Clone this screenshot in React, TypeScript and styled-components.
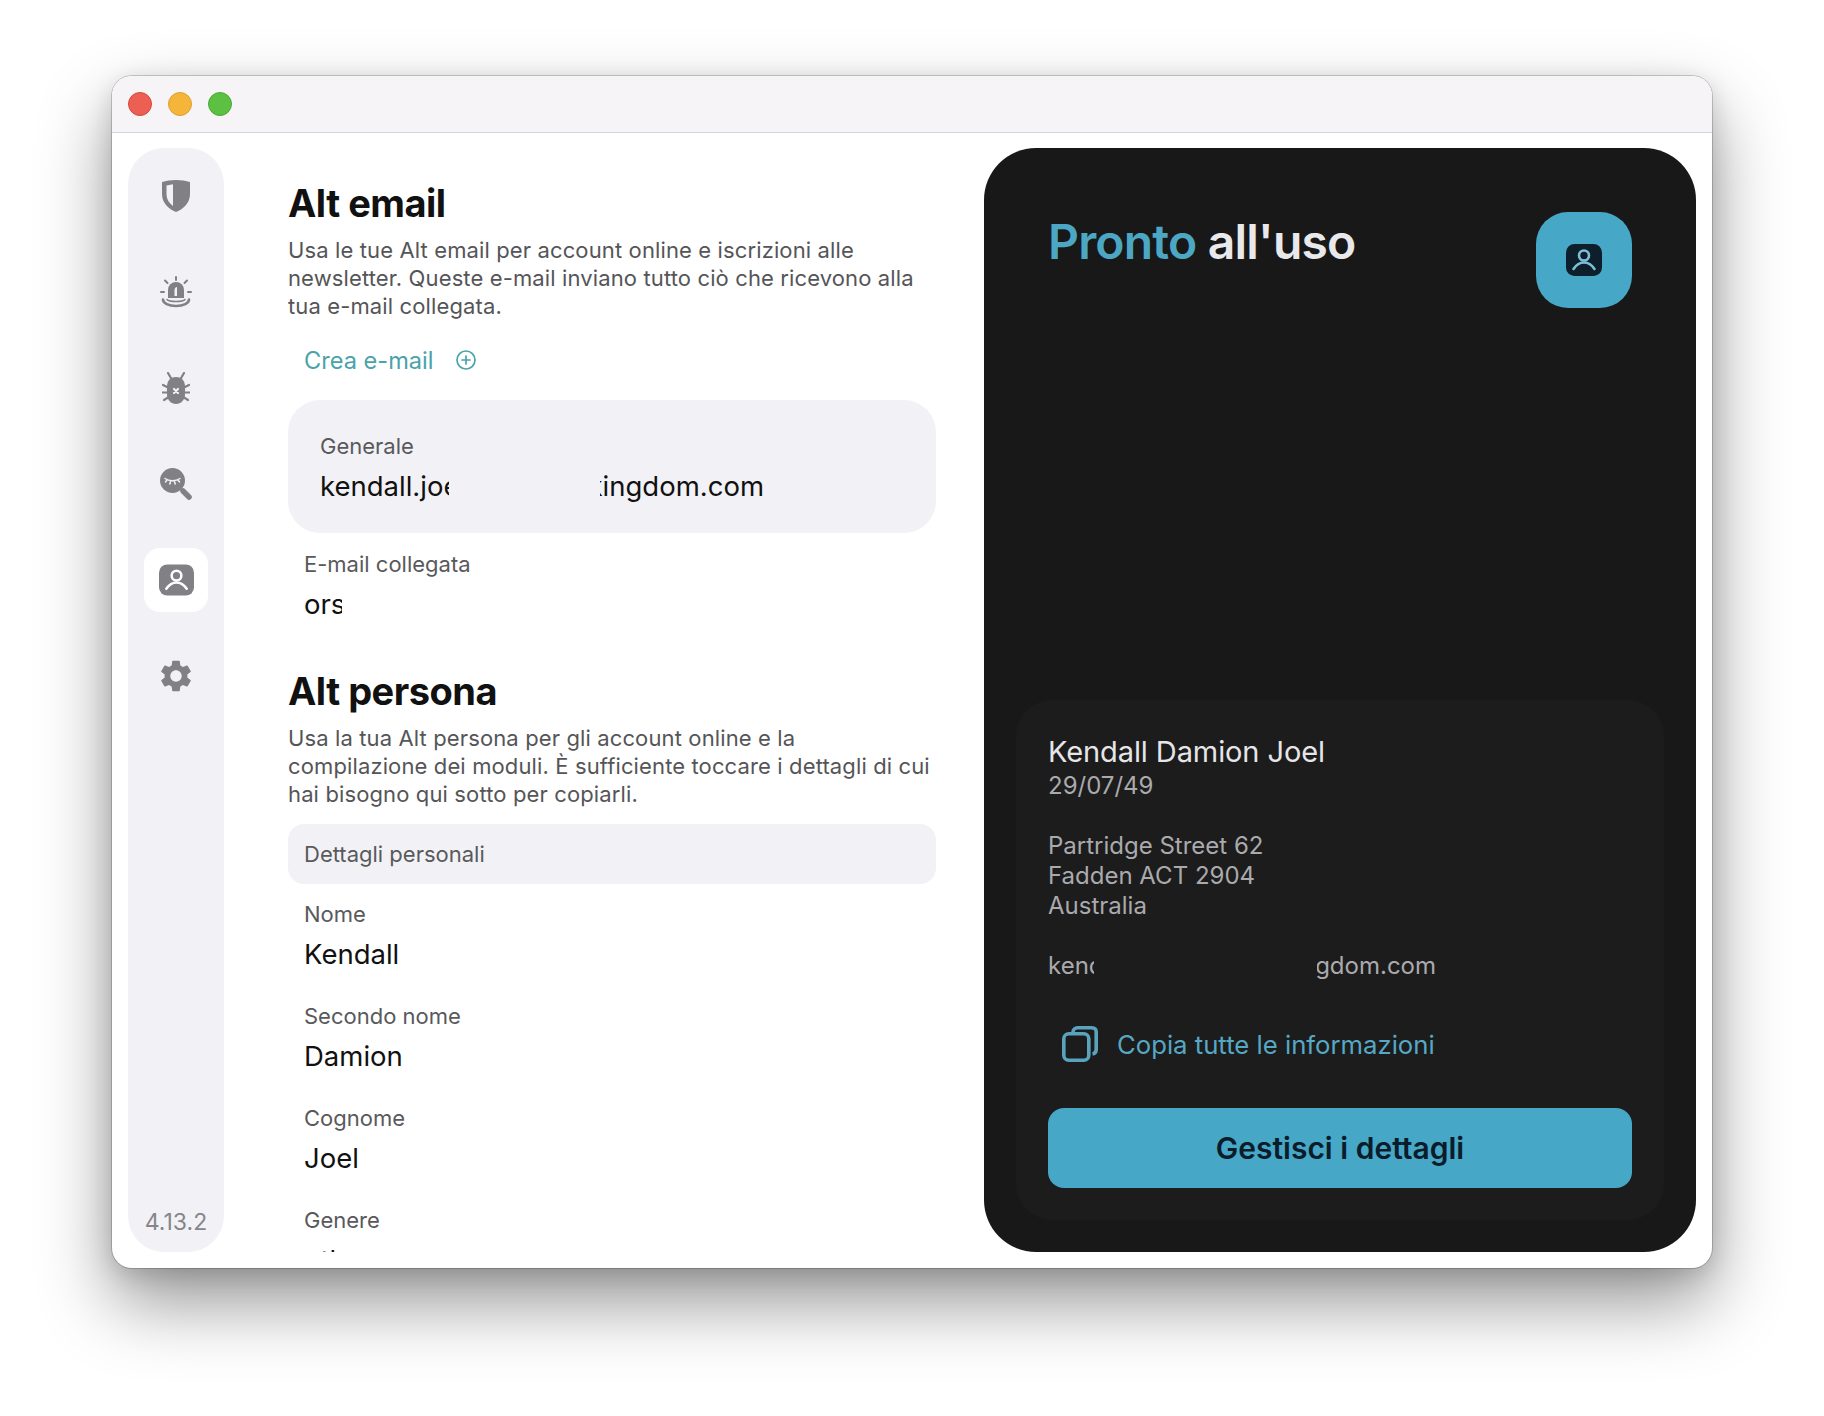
import styled, { createGlobalStyle } from "styled-components";
import { MdSettings } from "react-icons/md";

const GlobalStyle = createGlobalStyle`
	html, body {
		margin: 0;
		background: #fff;
		font-family: Inter, "Noto Sans", sans-serif;
	}
	* { box-sizing: border-box; }
`;

const Page = styled.div`
	width: 1824px;
	height: 1416px;
	padding: 76px 112px 0;
	overflow: hidden;
`;
const AppWindow = styled.div`
	width: 1600px;
	height: 1192px;
	border-radius: 20px;
	background: #fff;
	overflow: hidden;
	box-shadow: 0 0 0 1px rgba(0, 0, 0, 0.18), 0 34px 72px rgba(0, 0, 0, 0.42), 0 6px 24px rgba(0, 0, 0, 0.14);
`;
const TitleBar = styled.div`
	height: 57px;
	background: #f6f4f7;
	border-bottom: 1px solid #d4d4d8;
	display: flex;
	align-items: center;
	gap: 16px;
	padding: 0 16px 1px;
`;
const Light = styled.span<{ $color: string; $edge: string }>`
	width: 24px;
	height: 24px;
	border-radius: 50%;
	background: ${(p) => p.$color};
	border: 1px solid ${(p) => p.$edge};
`;
const Main = styled.div`
	height: 1135px;
	display: flex;
	padding: 15px 16px 16px;
`;
const Sidebar = styled.nav`
	width: 96px;
	flex: none;
	background: #f2f2f6;
	border-radius: 36px;
	display: flex;
	flex-direction: column;
	align-items: center;
	gap: 32px;
	padding: 16px 0 0;
`;
const NavItem = styled.div<{ $active?: boolean }>`
	width: 64px;
	height: 64px;
	flex: none;
	border-radius: 16px;
	display: flex;
	align-items: center;
	justify-content: center;
	color: #808085;
	background: ${(p) => (p.$active ? "#fff" : "transparent")};
`;
const Version = styled.div`
	margin-top: auto;
	margin-bottom: 16px;
	font-size: 23px;
	color: #85858a;
`;
const Content = styled.main`
	width: 648px;
	flex: none;
	margin-left: 64px;
	overflow: hidden;
`;
const Section = styled.section`
	padding-top: 32px;
`;
const Heading = styled.h2`
	margin: 0;
	font-size: 38px;
	line-height: 46px;
	font-weight: 700;
	letter-spacing: -0.5px;
	color: #111;
`;
const Description = styled.p`
	margin: 10px 0 0;
	font-size: 22px;
	line-height: 28px;
	letter-spacing: 0.125px;
	color: #555558;
`;
const CreateLink = styled.div`
	display: flex;
	align-items: center;
	gap: 22px;
	margin: 24px 0 0 16px;
	height: 32px;
	font-size: 23.6px;
	font-weight: 400;
	color: #4aa3a8;
`;
const AccountCard = styled.div`
	margin-top: 24px;
	height: 133px;
	background: #f2f2f6;
	border-radius: 32px;
	padding: 32px 32px 0;
`;
const Field = styled.div`
	padding-left: 16px;
	height: 102px;
`;
const FieldLabel = styled.div`
	font-size: 22px;
	line-height: 28px;
	color: #59595c;
`;
const FieldValue = styled.div`
	margin-top: 8px;
	height: 36px;
	font-size: 27.5px;
	line-height: 36px;
	color: #111;
	display: flex;
	white-space: nowrap;
`;
const Clip = styled.span<{ $width: number; $end?: boolean; $gap?: number }>`
	display: flex;
	flex: none;
	overflow: hidden;
	width: ${(p) => p.$width}px;
	margin-left: ${(p) => p.$gap ?? 0}px;
	justify-content: ${(p) => (p.$end ? "flex-end" : "flex-start")};
`;
const LinkedEmail = styled(Field)`
	margin-top: 17px;
	height: 86px;
`;
const GroupBar = styled.div`
	margin-top: 16px;
	height: 60px;
	background: #f2f2f6;
	border-radius: 16px;
	padding-left: 16px;
	display: flex;
	align-items: center;
	font-size: 22px;
	color: #59595c;
`;
const Fields = styled.div`
	padding-top: 16px;
`;
const Panel = styled.aside`
	width: 712px;
	flex: none;
	margin-left: 48px;
	background: #181818;
	border-radius: 52px;
	padding: 64px 32px 32px;
	display: flex;
	flex-direction: column;
`;
const PanelHead = styled.div`
	display: flex;
	justify-content: space-between;
	padding: 0 32px;
`;
const PanelTitle = styled.h1`
	margin: 1px 0 0;
	font-size: 48px;
	line-height: 58px;
	font-weight: 600;
	letter-spacing: -0.8px;
	color: #e9e9eb;
`;
const Accent = styled.span`
	color: #4ba7c4;
`;
const Tile = styled.div`
	width: 96px;
	height: 96px;
	border-radius: 32px;
	background: #47a7c7;
	display: flex;
	align-items: center;
	justify-content: center;
`;
const InfoCard = styled.div`
	margin-top: auto;
	height: 520px;
	background: #1c1c1d;
	border-radius: 36px;
	padding: 33px 32px 0;
	display: flex;
	flex-direction: column;
`;
const PersonName = styled.div`
	font-size: 29px;
	line-height: 38px;
	font-weight: 400;
	letter-spacing: -0.1px;
	color: #e6e6e8;
`;
const InfoLine = styled.div`
	font-size: 24px;
	line-height: 30px;
	color: #aaaaad;
`;
const InfoBlock = styled.div<{ $gap: number }>`
	margin-top: ${(p) => p.$gap}px;
`;
const EmailLine = styled(InfoLine)`
	display: flex;
	white-space: nowrap;
`;
const CopyRow = styled.div`
	margin: 45px 0 0 14px;
	height: 36px;
	display: flex;
	align-items: center;
	gap: 19px;
	font-size: 25.7px;
	color: #56a8c4;
`;
const ManageButton = styled.div`
	margin-top: 46px;
	height: 80px;
	border-radius: 16px;
	background: #47a7c7;
	display: flex;
	align-items: center;
	justify-content: center;
	font-size: 30px;
	font-weight: 600;
	color: #0b1d2b;
`;

const gray = "#808085";

const ShieldIcon = () => (
	<svg width="28" height="32" viewBox="0 0 28 32">
		<path d="M14 0C19 0 24 .8 28 2v12c0 9-6.500 15-14 18C6.500 29 0 23 0 14V2C4 .8 9 0 14 0Z" fill={gray} />
		<path d="M4.500 5.500 11 4.300v21.700C7 23 4.500 19 4.500 14Z" fill="#f2f2f6" />
	</svg>
);

const SirenIcon = () => (
	<svg width="32" height="32" viewBox="0 0 32 32" fill="none" stroke={gray} strokeWidth="2" strokeLinecap="round">
		<path d="M16 1v3M5 4.500l2.500 2.500M27 4.500 24.500 7M1 16h3M28 16h3" />
		<path d="M8 22v-8a8 8 0 0 1 16 0v8Z" fill={gray} stroke="none" />
		<path d="M14.500 20v-6c0-1.500 1-2.800 2.500-3v9Z" fill="#f2f2f6" stroke="none" />
		<path d="M3 23.500c0 3.500 5.500 6.500 13 6.500s13-3 13-6.500" strokeWidth="2.600" />
		<path d="M7 23.500c1 1.200 4 2 9 2s8-.8 9-2" strokeWidth="1.600" />
	</svg>
);

const BugIcon = () => (
	<svg width="28" height="32" viewBox="0 0 28 32" fill="none" stroke={gray} strokeWidth="2.200" strokeLinecap="round">
		<path d="M6 1l3.500 6M22 1l-3.500 6M1 13l4 2M27 13l-4 2M0.500 20.500H5M27.500 20.500H23M2 28l4-2.500M26 28l-4-2.500" />
		<path d="M14 5c6 0 9 4 9 10v7c0 6-4 10-9 10S5 28 5 22v-7C5 9 8 5 14 5Z" fill={gray} stroke="none" />
		<path d="M12 17l4 4M16 17l-4 4" stroke="#f2f2f6" strokeWidth="2.200" />
	</svg>
);

const PeekIcon = () => (
	<svg width="32" height="32" viewBox="0 0 32 32" fill="none" strokeLinecap="round">
		<circle cx="12.500" cy="12.500" r="12.500" fill={gray} />
		<path d="M23 23l6 6" stroke={gray} strokeWidth="5.500" />
		<path d="M5 10.500c4 3 11 3 15 0M7 12l-1.500 2M10.500 13.500l-.7 2.500M14.500 13.500l.7 2.500M18 12l1.500 2" stroke="#f2f2f6" strokeWidth="1.500" />
	</svg>
);

const PersonTile = ({ w, h, fill, line }: { w: number; h: number; fill: string; line: string }) => (
	<svg width={w} height={h} viewBox="0 0 36 32" fill="none">
		<rect width="36" height="32" rx="8.500" fill={fill} />
		<circle cx="18" cy="11.500" r="5" stroke={line} strokeWidth="2.600" />
		<path d="M7.500 25c3-4.500 6.500-6.500 10.500-6.500s7.500 2 10.500 6.500" stroke={line} strokeWidth="2.600" strokeLinecap="round" />
	</svg>
);

const PlusCircleIcon = () => (
	<svg width="20" height="20" viewBox="0 0 20 20" fill="none" stroke="#4aa3a8" strokeWidth="1.700" strokeLinecap="round">
		<circle cx="10" cy="10" r="9" />
		<path d="M10 6v8M6 10h8" />
	</svg>
);

const CopyIcon = () => (
	<svg width="36" height="36" viewBox="0 0 36 36" fill="none" stroke="#5aa3bd" strokeWidth="3.600">
		<path d="M11 7V6C11 3.500 13 1.800 15.500 1.800H29.500C32.500 1.800 34.200 3.500 34.200 6V23.500C34.200 26 33 27.500 30.500 28" />
		<rect x="1.800" y="7.800" width="25" height="26.400" rx="5" />
	</svg>
);

const navItems = [
	<ShieldIcon key="shield" />,
	<SirenIcon key="siren" />,
	<BugIcon key="bug" />,
	<PeekIcon key="peek" />,
];

const personalFields = [
	["Nome", "Kendall"],
	["Secondo nome", "Damion"],
	["Cognome", "Joel"],
	["Genere", "other"],
];

export default function App() {
	return (
		<Page>
			<GlobalStyle />
			<AppWindow>
				<TitleBar>
					<Light $color="#ec5f52" $edge="#d2493d" />
					<Light $color="#f5b53a" $edge="#dd9f2e" />
					<Light $color="#5cc043" $edge="#4aa936" />
				</TitleBar>
				<Main>
					<Sidebar>
						{navItems.map((icon) => (
							<NavItem key={icon.key}>{icon}</NavItem>
						))}
						<NavItem $active>
							<PersonTile w={35} h={32} fill={gray} line="#fff" />
						</NavItem>
						<NavItem>
							<MdSettings size={38} />
						</NavItem>
						<Version>4.13.2</Version>
					</Sidebar>
					<Content>
						<Section>
							<Heading>Alt email</Heading>
							<Description>
								Usa le tue Alt email per account online e iscrizioni alle newsletter. Queste e-mail
								inviano tutto ciò che ricevono alla tua e-mail collegata.
							</Description>
							<CreateLink>
								Crea e-mail
								<PlusCircleIcon />
							</CreateLink>
							<AccountCard>
								<FieldLabel>Generale</FieldLabel>
								<FieldValue>
									<Clip $width={129}>kendall.joel</Clip>
									<Clip $width={164} $end $gap={151}>
										kingdom.com
									</Clip>
								</FieldValue>
							</AccountCard>
							<LinkedEmail>
								<FieldLabel>E-mail collegata</FieldLabel>
								<FieldValue>
									<Clip $width={38}>orso</Clip>
								</FieldValue>
							</LinkedEmail>
						</Section>
						<Section>
							<Heading>Alt persona</Heading>
							<Description>
								Usa la tua Alt persona per gli account online e la compilazione dei moduli. È
								sufficiente toccare i dettagli di cui hai bisogno qui sotto per copiarli.
							</Description>
							<GroupBar>Dettagli personali</GroupBar>
							<Fields>
								{personalFields.map(([label, value]) => (
									<Field key={label}>
										<FieldLabel>{label}</FieldLabel>
										<FieldValue>{value}</FieldValue>
									</Field>
								))}
							</Fields>
						</Section>
					</Content>
					<Panel>
						<PanelHead>
							<PanelTitle>
								<Accent>Pronto</Accent> all'uso
							</PanelTitle>
							<Tile>
								<PersonTile w={36} h={32} fill="#0d1f2b" line="#7dc0d6" />
							</Tile>
						</PanelHead>
						<InfoCard>
							<PersonName>Kendall Damion Joel</PersonName>
							<InfoLine>29/07/49</InfoLine>
							<InfoBlock $gap={30}>
								<InfoLine>Partridge Street 62</InfoLine>
								<InfoLine>Fadden ACT 2904</InfoLine>
								<InfoLine>Australia</InfoLine>
							</InfoBlock>
							<InfoBlock $gap={30}>
								<EmailLine>
									<Clip $width={46}>kendall</Clip>
									<Clip $width={119} $end $gap={223}>
										kingdom.com
									</Clip>
								</EmailLine>
							</InfoBlock>
							<CopyRow>
								<CopyIcon />
								Copia tutte le informazioni
							</CopyRow>
							<ManageButton>Gestisci i dettagli</ManageButton>
						</InfoCard>
					</Panel>
				</Main>
			</AppWindow>
		</Page>
	);
}
